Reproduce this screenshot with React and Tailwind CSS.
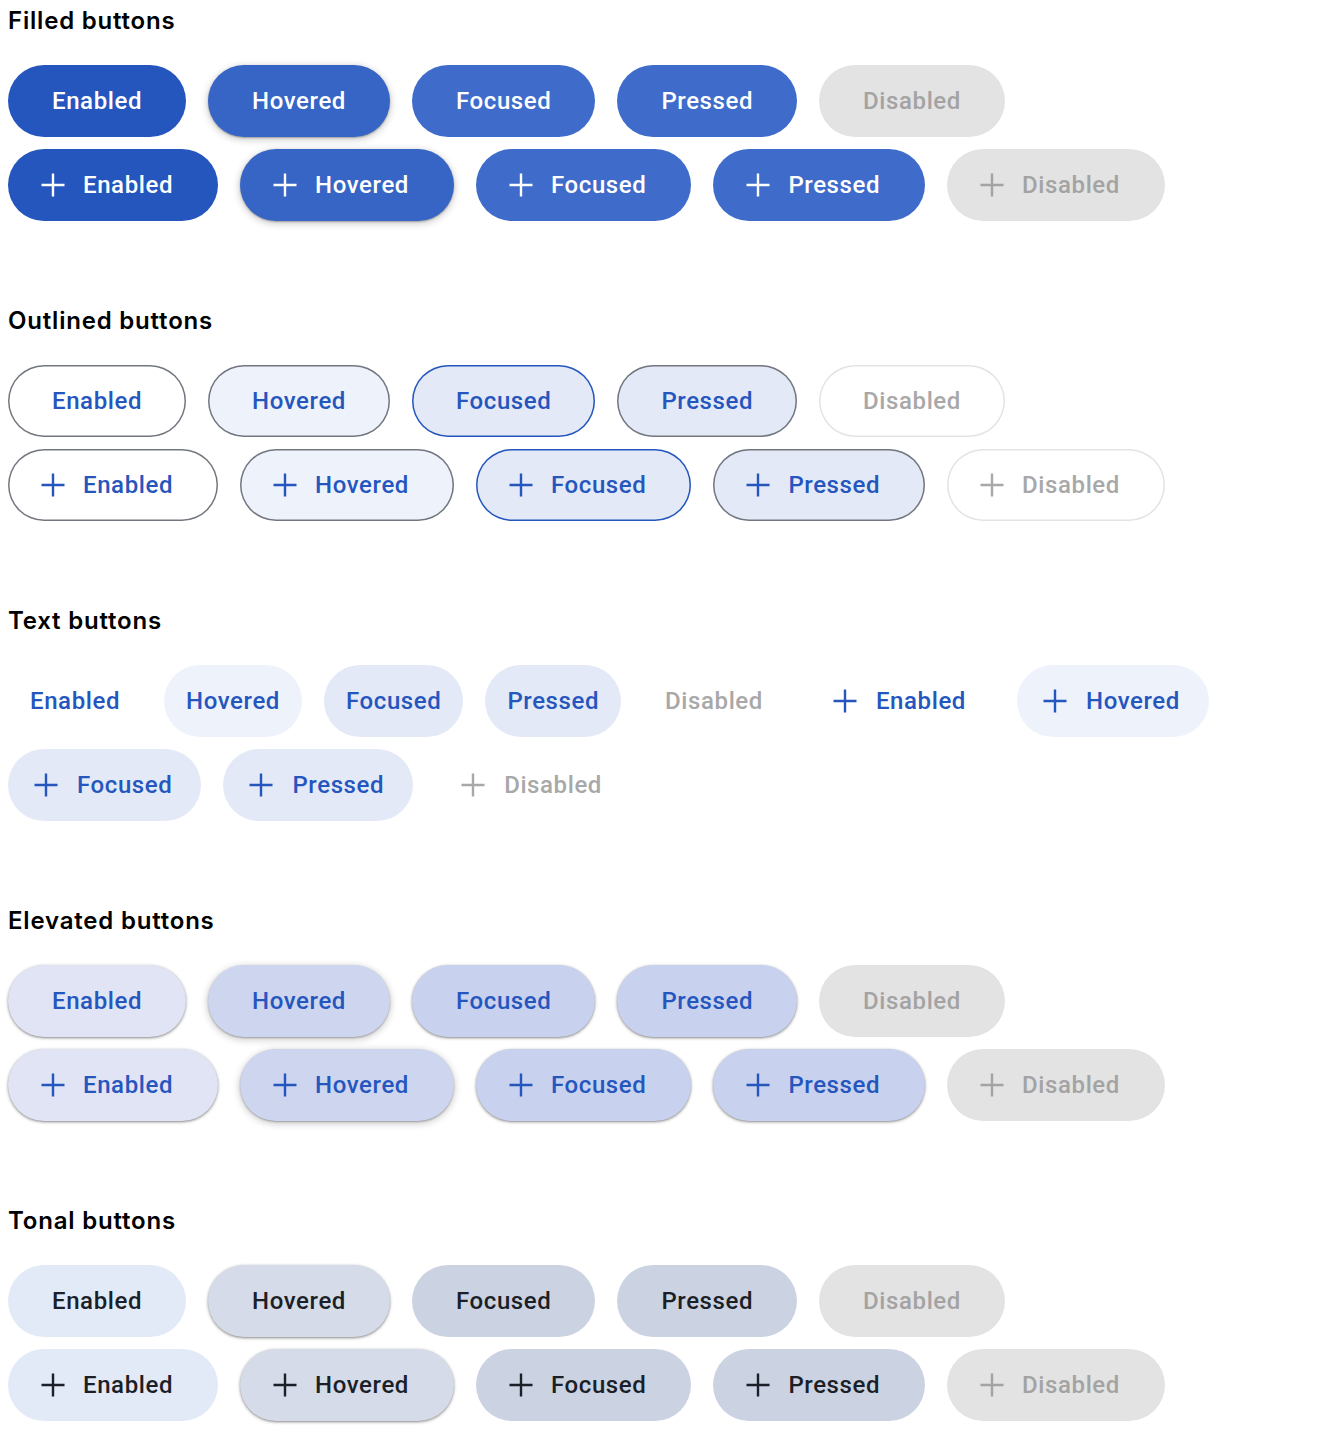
import React from "react";

const Plus = ({ className = "" }) => (
  <svg width="32" height="32" viewBox="0 0 32 32" className={className} fill="none">
    <path d="M16 4.5v23M4.5 16h23" stroke="currentColor" strokeWidth="2.4" />
  </svg>
);

const base =
  "h-[72px] rounded-full flex items-center shrink-0 text-[24px] font-medium tracking-[0.6px] whitespace-nowrap box-border";

function Btn({ icon, label, cls, text }) {
  const pad = text
    ? icon
      ? "pl-[22px] pr-[29px]"
      : "px-[22px]"
    : icon
    ? "pl-[29px] pr-[45px]"
    : "px-[44px]";
  return (
    <div className={`${base} ${pad} ${cls}`}>
      {icon && <Plus className={text ? "mr-[15px]" : "mr-[14px]"} />}
      <span>{label}</span>
    </div>
  );
}

const filled = {
  Enabled: "bg-[#2556be] text-white",
  Hovered: "bg-[#3665c5] text-white shadow-[0_1px_2px_rgba(0,0,0,0.3),0_2px_6px_2px_rgba(0,0,0,0.15)]",
  Focused: "bg-[#3f6bca] text-white",
  Pressed: "bg-[#3f6bca] text-white",
  Disabled: "bg-[#e3e3e3] text-[#a3a3a3]",
};
const outlined = {
  Enabled: "shadow-[inset_0_0_0_1.5px_#72777f] text-[#2556be] bg-white",
  Hovered: "shadow-[inset_0_0_0_1.5px_#72777f] text-[#2556be] bg-[#eef2fb]",
  Focused: "shadow-[inset_0_0_0_1.5px_#2556be] text-[#2556be] bg-[#e3e9f6]",
  Pressed: "shadow-[inset_0_0_0_1.5px_#72777f] text-[#2556be] bg-[#e3e9f6]",
  Disabled: "shadow-[inset_0_0_0_1.5px_#e3e3e3] text-[#a8a8a8] bg-white",
};
const textB = {
  Enabled: "text-[#2556be]",
  Hovered: "text-[#2556be] bg-[#eef2fb]",
  Focused: "text-[#2556be] bg-[#e3e9f6]",
  Pressed: "text-[#2556be] bg-[#e3e9f6]",
  Disabled: "text-[#a8a8a8]",
};
const elevated = {
  Enabled: "bg-[#e0e4f5] text-[#2556be] shadow-[0_1px_2px_rgba(0,0,0,0.3),0_1px_3px_1px_rgba(0,0,0,0.15)]",
  Hovered: "bg-[#cdd5ef] text-[#2556be] shadow-[0_1px_2px_rgba(0,0,0,0.3),0_2px_6px_2px_rgba(0,0,0,0.15)]",
  Focused: "bg-[#c8d1ed] text-[#2556be] shadow-[0_1px_2px_rgba(0,0,0,0.3),0_1px_3px_1px_rgba(0,0,0,0.15)]",
  Pressed: "bg-[#c8d1ed] text-[#2556be] shadow-[0_1px_2px_rgba(0,0,0,0.3),0_1px_3px_1px_rgba(0,0,0,0.15)]",
  Disabled: "bg-[#e3e3e3] text-[#a3a3a3]",
};
const tonal = {
  Enabled: "bg-[#e2e9f7] text-[#1b1f27]",
  Hovered: "bg-[#d5dbe8] text-[#1b1f27] shadow-[0_1px_2px_rgba(0,0,0,0.3),0_1px_3px_1px_rgba(0,0,0,0.15)]",
  Focused: "bg-[#cbd2e2] text-[#1b1f27]",
  Pressed: "bg-[#cbd2e2] text-[#1b1f27]",
  Disabled: "bg-[#e3e3e3] text-[#a3a3a3]",
};

const states = ["Enabled", "Hovered", "Focused", "Pressed", "Disabled"];

function Heading({ children }) {
  return (
    <h2 className="h-[32px] leading-[32px] text-[24px] font-semibold text-black font-['Inter',sans-serif] tracking-[0.8px]">
      {children}
    </h2>
  );
}

function Section({ title, map, last }) {
  return (
    <section className={last ? "" : "mb-[84px]"}>
      <Heading>{title}</Heading>
      <div className="mt-[28px] flex flex-col gap-[12px]">
        <div className="flex gap-[22px]">
          {states.map((s) => (
            <Btn key={s} label={s} cls={map[s]} />
          ))}
        </div>
        <div className="flex gap-[22px]">
          {states.map((s) => (
            <Btn key={s} icon label={s} cls={map[s]} />
          ))}
        </div>
      </div>
    </section>
  );
}

export default function App() {
  return (
    <div className="min-h-[1430px] bg-white pl-[8px] pt-[5px] font-['Roboto',sans-serif]">
      <Section title="Filled buttons" map={filled} />
      <Section title="Outlined buttons" map={outlined} />
      <section className="mb-[84px]">
        <Heading>Text buttons</Heading>
        <div className="mt-[28px] flex flex-col gap-[12px]">
          <div className="flex gap-[22px]">
            {states.map((s) => (
              <Btn key={s} text label={s} cls={textB[s]} />
            ))}
            <Btn text icon label="Enabled" cls={textB.Enabled} />
            <Btn text icon label="Hovered" cls={textB.Hovered} />
          </div>
          <div className="flex gap-[22px]">
            <Btn text icon label="Focused" cls={textB.Focused} />
            <Btn text icon label="Pressed" cls={textB.Pressed} />
            <Btn text icon label="Disabled" cls={textB.Disabled} />
          </div>
        </div>
      </section>
      <Section title="Elevated buttons" map={elevated} />
      <Section title="Tonal buttons" map={tonal} last />
    </div>
  );
}
